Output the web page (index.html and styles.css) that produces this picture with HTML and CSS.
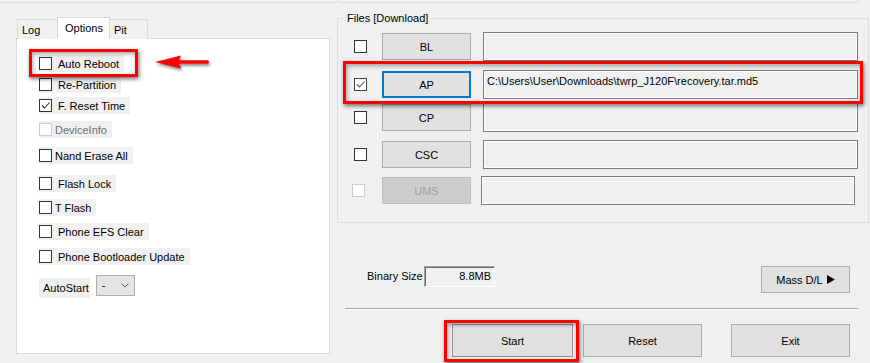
FILE: index.html
```html
<!DOCTYPE html>
<html lang="en">
<head>
    <meta charset="UTF-8">
    <title>Odin3</title>
    <link rel="stylesheet" href="styles.css">
</head>
<body>
    <div class="top-edge">
        <div class="edge-left"></div>
        <div class="edge-right"></div>
    </div>

    <div class="main">
        <div class="left">
            <div class="tabs">
                <div class="tab tab-log">Log</div>
                <div class="tab tab-options active">Options</div>
                <div class="tab tab-pit">Pit</div>
            </div>
            <div class="tab-panel">
                <div class="opt"><span class="box"></span><span class="opt-text">Auto Reboot</span></div>
                <div class="opt"><span class="box"></span><span class="opt-text">Re-Partition</span></div>
                <div class="opt"><span class="box checked"><svg viewBox="0 0 11 11"><path d="M2 5.5 L4.5 8 L9.5 2.5"/></svg></span><span class="opt-text">F. Reset Time</span></div>
                <div class="opt disabled"><span class="box"></span><span class="opt-text tight">DeviceInfo</span></div>
                <div class="opt"><span class="box"></span><span class="opt-text tight">Nand Erase All</span></div>
                <div class="opt"><span class="box"></span><span class="opt-text">Flash Lock</span></div>
                <div class="opt"><span class="box"></span><span class="opt-text tight">T Flash</span></div>
                <div class="opt"><span class="box"></span><span class="opt-text">Phone EFS Clear</span></div>
                <div class="opt"><span class="box"></span><span class="opt-text">Phone Bootloader Update</span></div>
                <div class="autostart">
                    <span class="autostart-label">AutoStart</span>
                    <div class="combo">
                        <span>-</span>
                        <svg class="chevron" viewBox="0 0 8 5"><path d="M0.5 0.5 L4 4 L7.5 0.5"/></svg>
                    </div>
                </div>
            </div>
        </div>

        <div class="right">
            <div class="group">
                <div class="group-title">Files [Download]</div>
                <div class="file-rows">
                    <div class="file-row">
                        <span class="box"></span>
                        <div class="btn file-btn">BL</div>
                        <div class="path"></div>
                    </div>
                    <div class="file-row">
                        <span class="box checked light"><svg viewBox="0 0 11 11"><path d="M2 5.5 L4.5 8 L9.5 2.5"/></svg></span>
                        <div class="btn file-btn focused">AP</div>
                        <div class="path">C:\Users\User\Downloads\twrp_J120F\recovery.tar.md5</div>
                    </div>
                    <div class="file-row">
                        <span class="box"></span>
                        <div class="btn file-btn">CP</div>
                        <div class="path"></div>
                    </div>
                    <div class="file-row">
                        <span class="box"></span>
                        <div class="btn file-btn">CSC</div>
                        <div class="path"></div>
                    </div>
                    <div class="file-row ums">
                        <span class="box off"></span>
                        <div class="btn file-btn off">UMS</div>
                        <div class="path"></div>
                    </div>
                </div>
            </div>

            <div class="size-row">
                <span class="size-label">Binary Size</span>
                <div class="size-field">8.8MB</div>
                <div class="btn mass-btn">Mass D/L <svg class="play" viewBox="0 0 8 9"><path d="M0 0 L8 4.5 L0 9 Z"/></svg></div>
            </div>

            <div class="sep"></div>

            <div class="actions">
                <div class="btn action-btn start">Start</div>
                <div class="btn action-btn reset">Reset</div>
                <div class="btn action-btn exit">Exit</div>
            </div>
        </div>
    </div>

    <!-- annotations drawn over the window -->
    <div class="mark mark-reboot"></div>
    <svg class="arrow" viewBox="0 0 60 20">
        <path d="M2 10 L28 3.5 L26 8.3 L55 8.3 Q57 10 55 11.7 L26 11.7 L28 16.5 Z"/>
    </svg>
    <div class="mark mark-ap"></div>
    <div class="mark mark-start"></div>
</body>
</html>
```

FILE: styles.css
```css
body {
    margin: 0;
    width: 870px;
    height: 363px;
    overflow: hidden;
    position: relative;
    background: #f0f0f0;
    font-family: "Liberation Sans", Arial, sans-serif;
    font-size: 11px;
    color: #000;
}

/* bottom edge of the group boxes above */
.top-edge {
    display: flex;
    height: 3px;
}
.edge-left {
    width: 337px;
    border-bottom: 1px solid #dcdcdc;
    border-right: 1px solid #dcdcdc;
    box-sizing: border-box;
}
.edge-right {
    width: 521px;
    margin-left: 1px;
    border-bottom: 1px solid #dcdcdc;
    border-right: 1px solid #dcdcdc;
    box-sizing: border-box;
}

.main {
    display: flex;
}

/* left: tab control */
.left {
    width: 337px;
    padding-left: 16px;
    box-sizing: border-box;
}
.tabs {
    display: flex;
    align-items: flex-start;
    height: 22px;
    margin: 14px 0 -1px 1px;
    position: relative;
    z-index: 1;
}
.tab {
    display: flex;
    align-items: center;
    box-sizing: border-box;
    height: 20px;
    margin-top: 2px;
    padding: 1px 0 0 4px;
    border: 1px solid #d9d9d9;
    border-bottom: none;
    background: #f0f0f0;
}
.tab-log {
    width: 41px;
}
.tab-options {
    width: 53px;
    margin-left: -1px;
    padding: 0 0 1px 7px;
}
.tab-pit {
    width: 39px;
    margin-left: -1px;
}
.tab.active {
    height: 22px;
    margin-top: 0;
    background: #fff;
    position: relative;
    z-index: 1;
}

.tab-panel {
    width: 314px;
    height: 316px;
    box-sizing: border-box;
    border: 1px solid #d9d9d9;
    background: #fff;
    padding: 16px 0 0 22px;
    display: grid;
    grid-template-rows: 21px 21px 24px 26px 28px 24px 24px 25px 27px auto;
    align-items: start;
}

.opt {
    display: flex;
    align-items: center;
    width: max-content;
    height: 17px;
    padding-right: 5px;
    background: #f0f0f0;
}
.opt-text {
    margin-left: 6px;
    white-space: nowrap;
}
.opt-text.tight {
    margin-left: 3px;
}
.opt.disabled .opt-text {
    color: #6d6d6d;
}
.opt.disabled .box {
    border-color: #cccccc;
}

.box {
    display: block;
    flex: none;
    width: 13px;
    height: 13px;
    box-sizing: border-box;
    border: 1px solid #333;
    background: #fff;
}
.box svg {
    display: block;
    width: 11px;
    height: 11px;
    fill: none;
    stroke: #333;
    stroke-width: 1.1;
}
.box.light {
    border-color: #444;
}
.box.light svg {
    stroke: #555;
}
.box.off {
    border-color: #cccccc;
}

.autostart {
    display: flex;
    align-items: flex-start;
}
.autostart-label {
    height: 20px;
    line-height: 20px;
    margin-top: 3px;
    padding: 0 1px 0 4px;
    background: #f0f0f0;
}
.combo {
    display: flex;
    align-items: center;
    justify-content: space-between;
    width: 39px;
    height: 21px;
    margin-left: 6px;
    box-sizing: border-box;
    padding: 0 5px 1px 5px;
    border: 1px solid #acacac;
    background: #e5e5e5;
}
.chevron {
    width: 8px;
    height: 5px;
    fill: none;
    stroke: #555;
    stroke-width: 1;
}

/* right: files group and buttons */
.right {
    width: 533px;
}
.group {
    width: 532px;
    box-sizing: border-box;
    margin-top: 15px;
    border: 1px solid #dcdcdc;
    padding-bottom: 17px;
}
.group-title {
    width: max-content;
    line-height: 13px;
    margin: -7px 0 7px 7px;
    padding: 0 2px;
    background: #f0f0f0;
}
.file-rows {
    display: grid;
    grid-template-rows: 38px 33px 37px 36px 29px;
}
.file-row {
    display: flex;
    align-items: center;
    height: 29px;
}
.file-row .box {
    margin-left: 16px;
}
.btn {
    display: flex;
    align-items: center;
    justify-content: center;
    box-sizing: border-box;
    border: 1px solid #adadad;
    background: #e1e1e1;
}
.file-btn {
    width: 89px;
    height: 27px;
    margin-left: 15px;
}
.file-btn.focused {
    border: 2px solid #0078d7;
}
.file-btn.off {
    background: #cccccc;
    border-color: #bfbfbf;
    color: #a0a0a0;
}
.path {
    width: 375px;
    height: 29px;
    box-sizing: border-box;
    margin-left: 12px;
    padding: 4px 0 0 3px;
    border: 1px solid #7a7a7a;
    box-shadow: inset 0 0 0 1px #fff;
    background: #f0f0f0;
    line-height: 13px;
    white-space: nowrap;
}
.ums .box {
    margin-left: 14px;
}
.ums .file-btn {
    margin-left: 17px;
}
.ums .path {
    width: 374px;
    margin-left: 10px;
}

.size-row {
    display: flex;
    align-items: flex-start;
    margin-top: 43px;
    height: 27px;
}
.size-label {
    width: 52px;
    margin-left: 30px;
    line-height: 21px;
    white-space: nowrap;
}
.size-field {
    width: 71px;
    height: 21px;
    box-sizing: border-box;
    margin-left: 5px;
    padding-right: 3px;
    border: 1px solid;
    border-color: #a0a0a0 #fff #fff #a0a0a0;
    box-shadow: inset 1px 1px 0 #696969;
    text-align: right;
    line-height: 19px;
}
.mass-btn {
    width: 89px;
    height: 27px;
    margin-left: auto;
    margin-right: 20px;
}
.play {
    width: 8px;
    height: 9px;
    margin-left: 4px;
    fill: #000;
}

.sep {
    width: 513px;
    margin: 15px 0 0 8px;
    border-top: 1px solid #a0a0a0;
    border-bottom: 1px solid #fff;
}

.actions {
    display: flex;
    margin-top: 14px;
}
.action-btn {
    height: 33px;
    width: 119px;
}
.start {
    width: 121px;
    margin-left: 115px;
    border-color: #8f8f8f;
}
.reset {
    margin-left: 10px;
}
.exit {
    margin-left: 29px;
}

/* red highlights from the screenshot */
.mark {
    position: absolute;
    box-sizing: border-box;
    border: 3px solid #ff0000;
    box-shadow: 1px 2px 4px rgba(0, 0, 0, 0.55), inset 1px 2px 4px rgba(0, 0, 0, 0.35);
}
.mark-reboot {
    left: 29px;
    top: 49px;
    width: 109px;
    height: 28px;
}
.mark-ap {
    left: 343px;
    top: 61px;
    width: 520px;
    height: 43px;
}
.mark-start {
    left: 444px;
    top: 320px;
    width: 135px;
    height: 42px;
}
.arrow {
    position: absolute;
    left: 153px;
    top: 52px;
    width: 60px;
    height: 20px;
    fill: #ff0000;
    filter: drop-shadow(1px 2px 1.5px rgba(0, 0, 0, 0.5));
}
```
